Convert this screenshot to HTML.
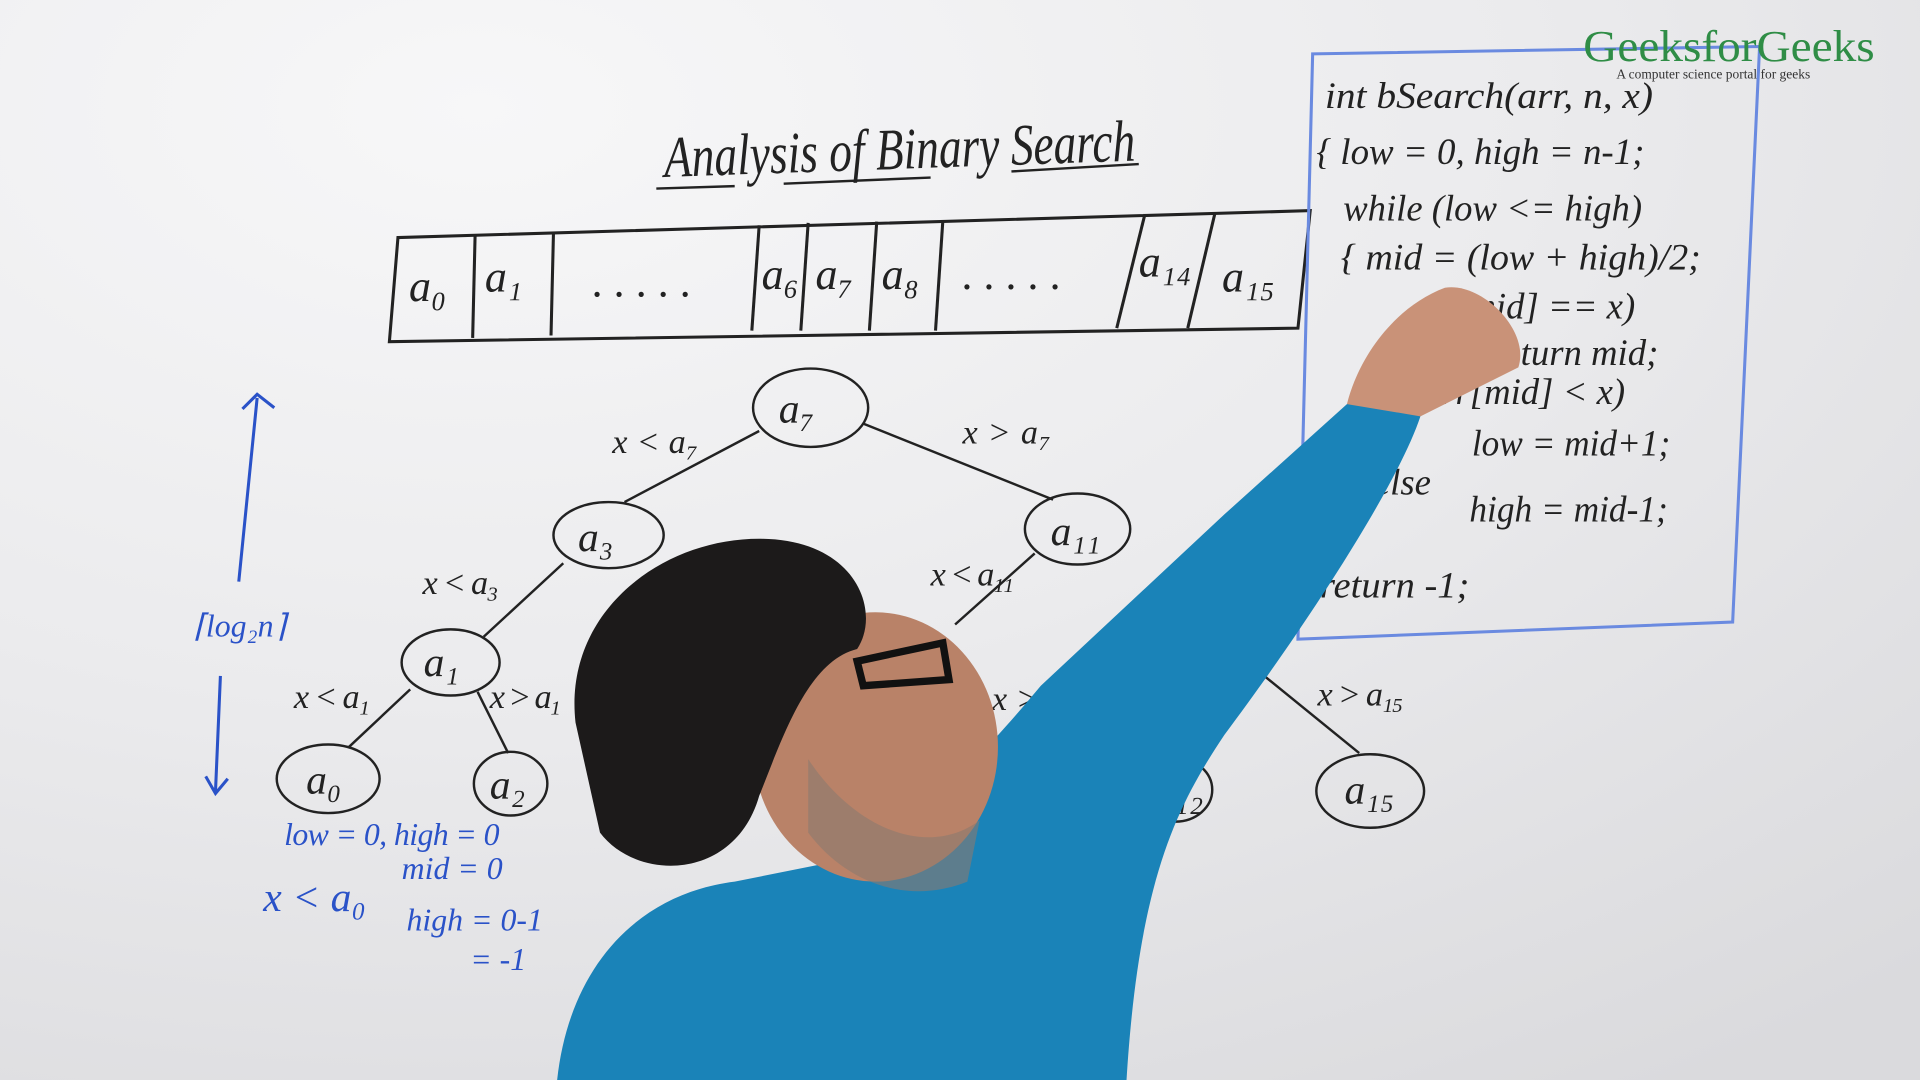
<!DOCTYPE html>
<html><head><meta charset="utf-8"><style>
html,body{margin:0;padding:0;width:1920px;height:1080px;overflow:hidden;background:#e6e6e8}
svg{display:block}
.h{font-family:"Liberation Serif",serif;font-style:italic;fill:#222}
.b{font-family:"Liberation Serif",serif;font-style:italic;fill:#2a52c8}
</style></head><body>
<svg width="1920" height="1080" viewBox="0 0 1568 882" preserveAspectRatio="none">
<defs>
<radialGradient id="bg" cx="0.25" cy="0.1" r="1.1">
<stop offset="0" stop-color="#f7f7f8"/><stop offset="0.5" stop-color="#ebebed"/><stop offset="1" stop-color="#dadadd"/>
</radialGradient>
</defs>
<rect width="1568" height="882" fill="url(#bg)"/>
<!-- title -->
<text x="542" y="138" class="h" font-size="48" textLength="385" lengthAdjust="spacingAndGlyphs" transform="rotate(-2 730 120)">Analysis of Binary Search</text>
<path d="M536 154 L600 152 M640 150 L760 145 M826 140 L930 134" stroke="#222" stroke-width="2" fill="none"/>
<!-- array -->
<path d="M325 194 L1070 172 L1060 268 L318 279 Z" fill="none" stroke="#222" stroke-width="2.5"/>
<g stroke="#222" stroke-width="2.5">
<line x1="388" y1="192" x2="386" y2="276"/><line x1="452" y1="190" x2="450" y2="274"/>
<line x1="620" y1="184" x2="614" y2="270"/><line x1="660" y1="182" x2="654" y2="270"/>
<line x1="716" y1="181" x2="710" y2="270"/><line x1="770" y1="180" x2="764" y2="270"/>
<line x1="935" y1="175" x2="912" y2="268"/><line x1="992" y1="175" x2="970" y2="268"/>
</g>
<g class="h" font-size="36">
<text x="334" y="246">a₀</text><text x="396" y="238">a₁</text><text x="484" y="242">. . . . .</text>
<text x="622" y="236">a₆</text><text x="666" y="236">a₇</text><text x="720" y="236">a₈</text>
<text x="786" y="236">. . . . .</text><text x="930" y="226">a₁₄</text><text x="998" y="238">a₁₅</text>
</g>
<!-- tree -->
<g stroke="#222" stroke-width="2" fill="none">
<line x1="620" y1="352" x2="510" y2="410"/><line x1="705" y1="346" x2="860" y2="408"/>
<line x1="460" y1="460" x2="395" y2="520"/><line x1="845" y1="452" x2="780" y2="510"/>
<line x1="335" y1="563" x2="285" y2="610"/><line x1="390" y1="565" x2="415" y2="615"/>
<line x1="1030" y1="550" x2="1110" y2="615"/>
<ellipse cx="662" cy="333" rx="47" ry="32"/><ellipse cx="497" cy="437" rx="45" ry="27"/>
<ellipse cx="880" cy="432" rx="43" ry="29"/><ellipse cx="368" cy="541" rx="40" ry="27"/>
<ellipse cx="268" cy="636" rx="42" ry="28"/><ellipse cx="417" cy="640" rx="30" ry="26"/>
<ellipse cx="1119" cy="646" rx="44" ry="30"/><ellipse cx="960" cy="645" rx="30" ry="26"/>
</g>
<g class="h" font-size="34">
<text x="636" y="345">a₇</text><text x="472" y="450">a₃</text><text x="858" y="445">a₁₁</text>
<text x="346" y="552">a₁</text><text x="250" y="648">a₀</text><text x="400" y="652">a₂</text>
<text x="1098" y="656">a₁₅</text><text x="942" y="658">a₁₂</text>
</g>
<g class="h" font-size="28">
<text x="500" y="370" textLength="70">x &lt; a₇</text><text x="786" y="362" textLength="72">x &gt; a₇</text>
<text x="345" y="485" textLength="62">x &lt; a₃</text><text x="760" y="478" textLength="68">x &lt; a₁₁</text>
<text x="240" y="578" textLength="62">x &lt; a₁</text><text x="400" y="578" textLength="58">x &gt; a₁</text>
<text x="1076" y="576" textLength="70">x &gt; a₁₅</text><text x="810" y="580">x &gt;</text>
</g>
<!-- blue notes -->
<g stroke="#2a52c8" stroke-width="2.5" fill="none">
<path d="M195 475 L210 325 M198 334 L210 322 L224 333"/>
<path d="M180 552 L176 646 M168 634 L176 648 L186 636"/>
</g>
<g class="b" font-size="26">
<text x="158" y="520">⌈log₂n⌉</text>
<text x="232" y="690" textLength="176">low = 0, high = 0</text>
<text x="328" y="718">mid = 0</text>
<text x="215" y="744" font-size="34">x &lt; a₀</text>
<text x="332" y="760">high = 0-1</text>
<text x="384" y="792">= -1</text>
</g>
<!-- code box -->
<path d="M1072 44 L1437 38 L1415 508 L1060 522 Z" fill="none" stroke="#6a8ae0" stroke-width="2.5"/>
<g class="h" font-size="30">
<text x="1082" y="88" textLength="268" lengthAdjust="spacingAndGlyphs">int bSearch(arr, n, x)</text>
<text x="1075" y="134" textLength="268" lengthAdjust="spacingAndGlyphs">{ low = 0, high = n-1;</text>
<text x="1097" y="180" textLength="244" lengthAdjust="spacingAndGlyphs">while (low &lt;= high)</text>
<text x="1095" y="220" textLength="294" lengthAdjust="spacingAndGlyphs">{ mid = (low + high)/2;</text>
<text x="1200" y="260">mid] == x)</text>
<text x="1218" y="298">return mid;</text>
<text x="1152" y="330">(arr[mid] &lt; x)</text>
<text x="1202" y="372" textLength="162" lengthAdjust="spacingAndGlyphs">low = mid+1;</text>
<text x="1122" y="404">else</text>
<text x="1200" y="426" textLength="162" lengthAdjust="spacingAndGlyphs">high = mid-1;</text>
<text x="1078" y="488" textLength="122" lengthAdjust="spacingAndGlyphs">return -1;</text>
</g>
<!-- logo -->
<text x="1293" y="50" font-family="Liberation Serif,serif" font-size="36" fill="#2f8d46" textLength="238" lengthAdjust="spacingAndGlyphs">GeeksforGeeks</text>
<text x="1320" y="64" font-family="Liberation Serif,serif" font-size="11" fill="#333">A computer science portal for geeks</text>
<!-- person -->
<path d="M455 882 C465 790 520 730 600 720 L700 700 C760 660 800 620 850 560 L1000 420 L1100 330 C1130 300 1160 310 1160 340 C1140 400 1060 520 1000 600 C960 660 930 720 920 882 Z" fill="#1a83b8"/>
<path d="M1100 330 C1110 290 1140 250 1180 235 C1210 230 1250 270 1240 300 L1160 340 Z" fill="#c99278"/>
<ellipse cx="715" cy="610" rx="100" ry="110" fill="#b98268"/>
<path d="M470 590 C460 500 540 440 620 440 C700 440 720 500 700 530 C660 540 640 600 620 650 C600 720 520 720 490 680 Z" fill="#1c1a1a"/>
<path d="M700 540 L770 525 L775 555 L705 560 Z" fill="none" stroke="#111" stroke-width="6"/>
<path d="M660 620 C700 680 760 700 800 670 L790 720 C740 740 690 720 660 680 Z" fill="#8a7a70" opacity="0.6"/>
</svg>
</body></html>
